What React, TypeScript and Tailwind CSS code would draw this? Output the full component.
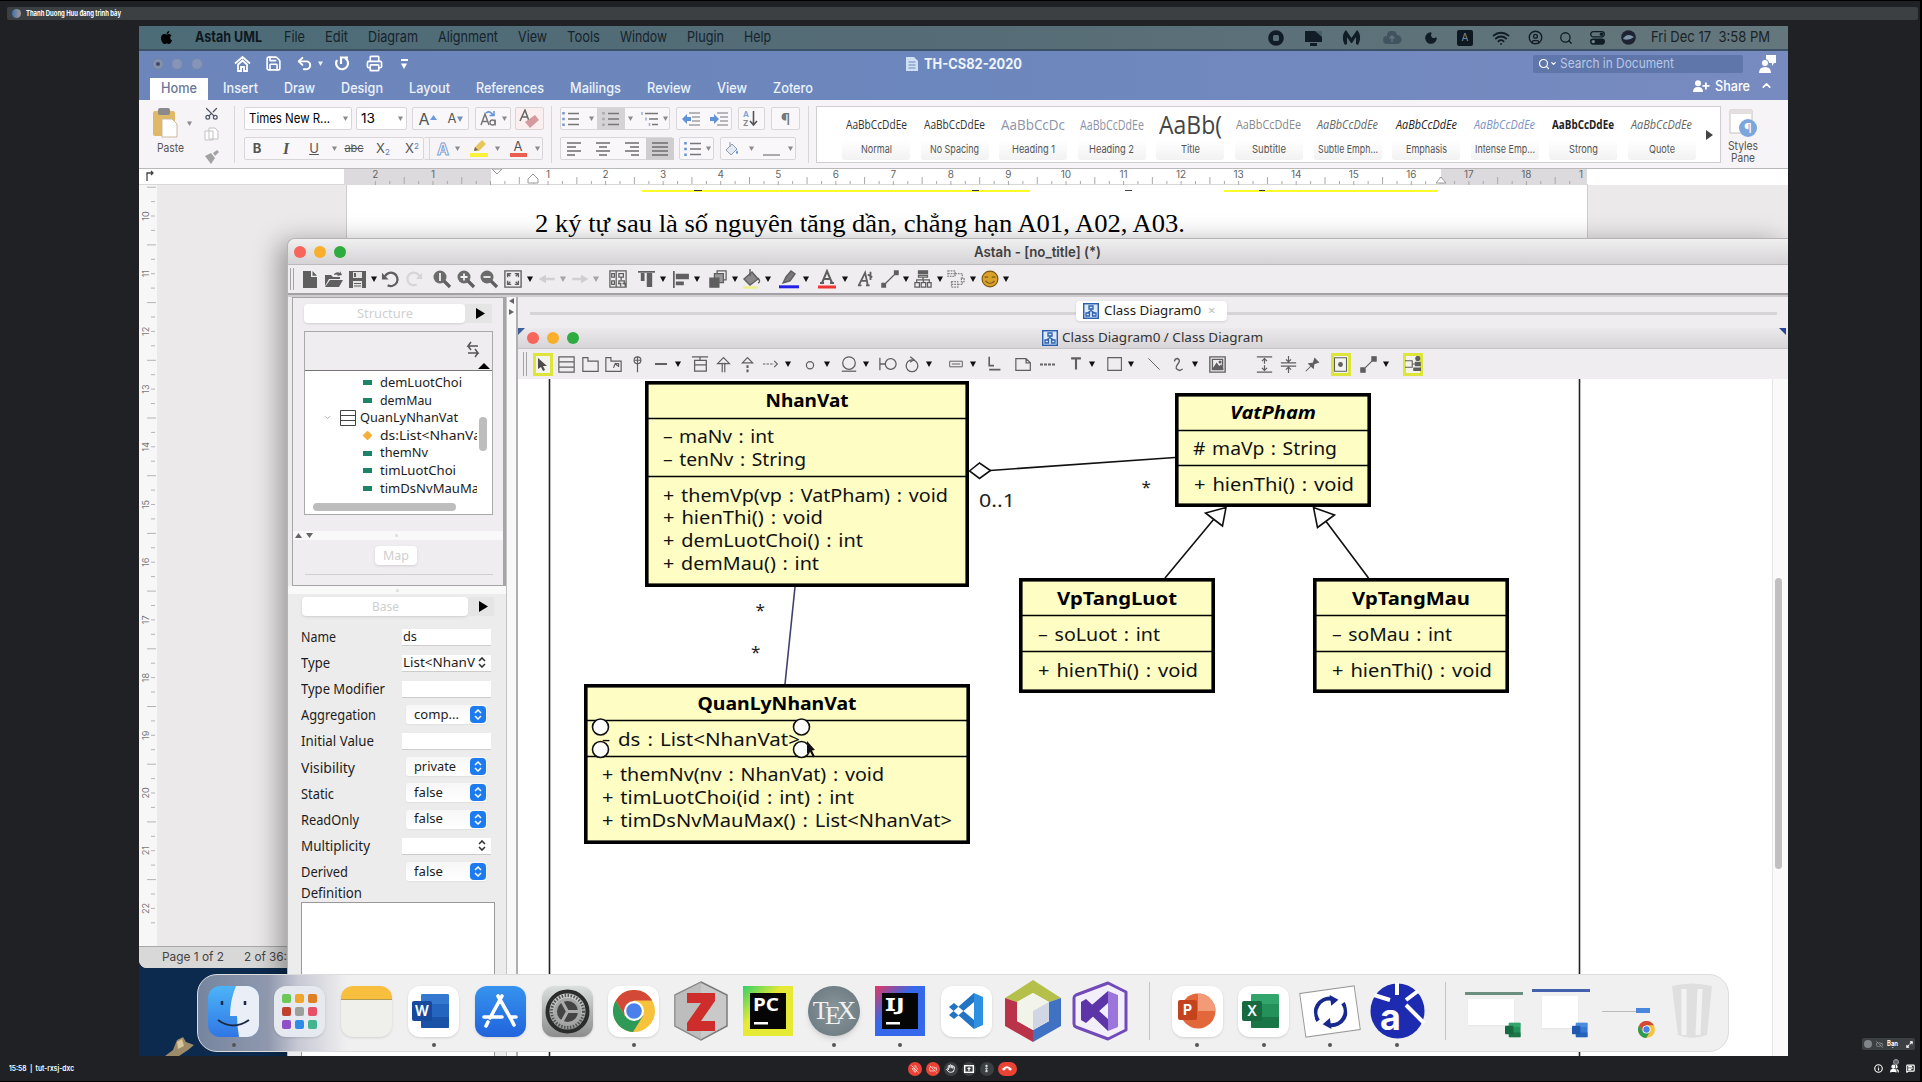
import React, { useLayoutEffect, useRef, useState } from "react";
import { Search, Wifi, Moon, CircleUser, ChevronUp, ChevronDown, Scissors, Printer, Save, Undo2, RotateCcw, Hand, MicOff, VideoOff, EllipsisVertical, Info, MessageSquareText, Maximize2, Users } from "lucide-react";
import { FaApple } from "react-icons/fa";

type Kids = { children?: React.ReactNode };

/* Single line of text stretched to an exact width */
function Fit({ w, className = "", children }: Kids & { w: number; className?: string }) {
  const ref = useRef<HTMLSpanElement>(null);
  const [k, setK] = useState(1);
  useLayoutEffect(() => {
    if (ref.current && ref.current.offsetWidth) setK(w / ref.current.getBoundingClientRect().width);
  }, [w]);
  return (
    <span className={"inline-flex shrink-0 whitespace-pre " + className} style={{ width: w }}>
      <span ref={ref} className="inline-block shrink-0 origin-left" style={{ transform: `scaleX(${k})` }}>
        {children}
      </span>
    </span>
  );
}

type Item = [number, number, React.ReactNode];

/* Toolbar row: each item is [centre, width, content]; gaps follow from the data */
function Row({ x0, items, className = "" }: { x0: number; items: Item[]; className?: string }) {
  let cur = x0;
  return (
    <div className={"flex items-center " + className}>
      {items.map(([cx, w, node], i) => {
        const ml = cx - w / 2 - cur;
        cur = cx + w / 2;
        return (
          <div key={i} className="flex shrink-0 items-center justify-center" style={{ marginLeft: ml, width: w }}>
            {node}
          </div>
        );
      })}
    </div>
  );
}

function G({ s = 20, children, c = "#5b5b5b", f = "none", sw = 1.4 }: Kids & { s?: number; c?: string; f?: string; sw?: number }) {
  return (
    <svg width={s} height={s} viewBox="0 0 20 20" fill={f} stroke={c} strokeWidth={sw} className="shrink-0">
      {children}
    </svg>
  );
}

const Down = ({ c = "#111", s = 6 }: { c?: string; s?: number }) => (
  <svg width={s} height={s} viewBox="0 0 6 6" className="shrink-0"><path d="M0 .5h6L3 6z" fill={c} /></svg>
);
const Right = () => (
  <svg width="9" height="11" viewBox="0 0 9 11" className="shrink-0"><path d="M0 0l9 5.5L0 11z" fill="#000" /></svg>
);
const Lights = ({ className = "" }: { className?: string }) => (
  <div className={"flex gap-[8px] " + className}>
    <i className="size-[12px] rounded-full bg-[#f8655a]" />
    <i className="size-[12px] rounded-full bg-[#f8b02c]" />
    <i className="size-[12px] rounded-full bg-[#2fac40]" />
  </div>
);

/* ---------- Mac menu bar ---------- */
const menus: [string, number][] = [["File", 21], ["Edit", 23], ["Diagram", 50], ["Alignment", 60], ["View", 29], ["Tools", 33], ["Window", 47], ["Plugin", 37], ["Help", 27]];

function MenuBar() {
  const k = "#101c26";
  return (
    <div className="flex h-[25px] items-center border-b-2 border-[#3d5166] bg-linear-to-r from-[#4c6c78] via-[#566c76] to-[#64777c] text-[15px] text-[#15232c]">
      <FaApple className="ml-[20px] size-[15px] text-black" />
      <Fit w={67} className="ml-[21px] font-bold text-[#0d1820]">Astah UML</Fit>
      <div className="ml-[22px] flex gap-5">
        {menus.map(([t, w]) => <Fit key={t} w={w}>{t}</Fit>)}
      </div>
      <Row
        x0={771}
        items={[
          [1276, 18, <svg width="16" height="16" viewBox="0 0 16 16"><circle cx="8" cy="8" r="7.8" fill={k} /><rect x="5" y="5" width="6" height="6" rx="1.5" fill="#566c76" /></svg>],
          [1313.5, 20, <svg width="19" height="16" viewBox="0 0 19 16"><path d="M1 1h17v11H1zM6 13h7v3H6z" fill={k} /><path d="M11 1h7v6z" fill="#4a5e68" /></svg>],
          [1351, 20, <svg width="19" height="17" viewBox="0 0 19 17"><path d="M4 1C0 5 0 11 3 16l2-1V8l4 6 1 0 4-6v7l2 1c3-5 3-11-1-15L9.500 9z" fill={k} /></svg>],
          [1392, 20, <svg width="20" height="14" viewBox="0 0 20 14"><path d="M5 13a4 4 0 010-8 5 5 0 0110-1 4.500 4.500 0 010 9z" fill="#40535f" /><path d="M10 5v6M7.500 7.500L10 5l2.500 2.500" stroke="#61757e" strokeWidth="1.500" fill="none" /></svg>],
          [1431, 16, <Moon size={14} fill={k} color={k} />],
          [1465, 16, <div className="flex h-[16px] w-[16px] items-center justify-center rounded-[2px] bg-[#0e1820] text-[10px] text-[#7d919b]">A</div>],
          [1501, 20, <Wifi size={18} color={k} strokeWidth={2.4} />],
          [1535, 16, <CircleUser size={15} color={k} strokeWidth={2.2} />],
          [1566, 16, <Search size={14} color={k} strokeWidth={2.2} />],
          [1597, 16, <svg width="15" height="14" viewBox="0 0 15 14"><rect x=".7" y=".7" width="13.600" height="5.200" rx="2.600" fill="none" stroke={k} strokeWidth="1.300" /><circle cx="11.500" cy="3.300" r="1.800" fill={k} /><rect x="0" y="7.500" width="15" height="6.200" rx="3.100" fill={k} /><circle cx="3.300" cy="10.600" r="1.700" fill="#71848b" /></svg>],
          [1628, 16, <svg width="15" height="15" viewBox="0 0 15 15"><circle cx="7.500" cy="7.500" r="7.300" fill="#1d2333" /><path d="M2 9q4-7 11-2-5 4-11 2" fill="#7e93a6" /></svg>],
          [1710, 119, <Fit w={119} className="text-[#1b2226]">{"Fri Dec 17  3:58 PM"}</Fit>],
        ]}
      />
    </div>
  );
}

/* ---------- Word ---------- */
const tabs: [string, number][] = [["Insert", 35], ["Draw", 31], ["Design", 42], ["Layout", 41], ["References", 68], ["Mailings", 51], ["Review", 44], ["View", 30], ["Zotero", 40]];

function WordTitle() {
  return (
    <div className="h-[49px] bg-linear-to-r from-[#6c86bb] via-[#6c87bd] via-50% to-[#788bc0] text-white">
      <Row
        x0={139}
        className="h-[25px]"
        items={[
          [158, 11, <i className="size-[10px] rounded-full bg-[#8290ae] ring-1 ring-[#7283a6]"><b className="m-[3px] block size-[4px] rounded-full bg-[#3e4a66]" /></i>],
          [177, 11, <i className="size-[10px] rounded-full bg-[#8595b8] ring-1 ring-[#7586ad]" />],
          [197, 11, <i className="size-[10px] rounded-full bg-[#8595b8] ring-1 ring-[#7586ad]" />],
          [242, 18, <svg width="17" height="16" viewBox="0 0 17 16" fill="none" stroke="#fff" strokeWidth="1.800"><path d="M1 7.500l7.500-6.500L16 7.500M3.500 9l5-4.500 5 4.500M4 9v6h3v-4h3v4h3V9" /></svg>],
          [273, 18, <Save size={17} strokeWidth={2.300} />],
          [304, 18, <Undo2 size={17} strokeWidth={2.8} />],
          [320, 6, <Down c="#e6ecf8" s={5} />],
          [342, 18, <svg width="16" height="17" viewBox="0 0 16 17" fill="none" stroke="#fff" strokeWidth="2.200"><path d="M3 5a6 6 0 108-2" /><path d="M7 9V2.500h7" /></svg>],
          [374, 18, <Printer size={17} strokeWidth={2.300} />],
          [404, 8, <div className="flex flex-col items-center gap-[2px]"><i className="h-[2px] w-[7px] bg-white" /><Down c="#fff" s={6} /></div>],
          [912, 13, <svg width="12" height="14" viewBox="0 0 12 14"><path d="M0 0h8l4 4v10H0z" fill="#cfe0f5" /><path d="M2.500 5h7M2.500 8h7M2.500 11h7" stroke="#6c87bd" /></svg>],
          [973, 98, <Fit w={98} className="text-[14px] font-bold text-[#eef3fb]">TH-CS82-2020</Fit>],
          [1638, 210, (
            <div className="flex h-[18px] w-full items-center rounded-[2px] bg-[#5f76ab] pl-[5px]">
              <Search size={12} strokeWidth={2.4} /><ChevronDown size={7} strokeWidth={4} />
              <Fit w={114} className="ml-[3px] text-[13.5px] text-[#b9c7e6]">Search in Document</Fit>
            </div>
          )],
          [1767, 18, <svg width="17" height="18" viewBox="0 0 17 18" fill="#fff"><path d="M7 0h10v8h-2l-2 3V8H7z" /><circle cx="6" cy="8" r="3.600" stroke="#7489bd" /><path d="M0 18q0-6 6-6t6 6z" /></svg>],
        ]}
      />
      <div className="flex h-[24px] items-center text-[14px]">
        <div className="mt-[2px] ml-[11px] flex h-[22px] w-[58px] items-center justify-center bg-white pb-[4px]">
          <Fit w={36} className="font-medium text-[#6a7796]">Home</Fit>
        </div>
        <div className="mb-[2px] ml-[15px] flex gap-[26px] text-[#edf2fb]">
          {tabs.map(([t, w]) => <Fit key={t} w={w} className="font-medium">{t}</Fit>)}
        </div>
        <div className="mb-[5px] ml-auto flex items-center pr-[15px]">
          <svg width="17" height="12" viewBox="0 0 17 12" fill="#fff"><circle cx="5" cy="3.200" r="3" /><path d="M0 12q0-5 5-5t5 5zM12 2.500h1.800V5h2.700v1.800h-2.700v2.700H12V6.800H9.500V5H12z" /></svg>
          <Fit w={35} className="ml-[5px] font-medium">Share</Fit>
          <ChevronUp size={13} strokeWidth={3} className="ml-[10px]" />
        </div>
      </div>
    </div>
  );
}

const Chev = () => <Down c="#8b8b8b" s={5} />;
const box = "flex h-[23px] items-center rounded-[2px] border border-[#d9d6d9] bg-[#f9f7f9]";
const Lines = ({ d }: { d: string }) => <svg width="16" height="14" viewBox="0 0 16 14" fill="none" stroke="#6e6e6e" strokeWidth="1.300"><path d={d} /></svg>;
const Dotted = ({ c }: { c: string }) => (
  <svg width="18" height="16" viewBox="0 0 18 16" fill="none"><path d="M6 2.500h11M6 8h11M6 13.500h11" stroke="#777" strokeWidth="1.300" /><path d="M1.500 1v14" stroke={c} strokeWidth="2.500" strokeDasharray="2.500 3.200" /></svg>
);
const Box = ({ children, w }: Kids & { w: number }) => <div className={box} style={{ width: w }}>{children}</div>;

const styles: [string, number, string, number, string][] = [
  ["Normal", 31, "text-[13px] text-[#333]", 61, "AaBbCcDdEe"],
  ["No Spacing", 49, "text-[13px] text-[#333]", 61, "AaBbCcDdEe"],
  ["Heading 1", 43, "text-[15px] text-[#8b93a8]", 64, "AaBbCcDc"],
  ["Heading 2", 45, "text-[14px] text-[#8b93a8]", 64, "AaBbCcDdEe"],
  ["Title", 19, "text-[25px] text-[#444]", 63, "AaBb("],
  ["Subtitle", 34, "text-[12px] text-[#888]", 65, "AaBbCcDdEe"],
  ["Subtle Emph...", 60, "text-[13px] italic text-[#666]", 61, "AaBbCcDdEe"],
  ["Emphasis", 41, "text-[13px] italic text-[#222]", 61, "AaBbCcDdEe"],
  ["Intense Emp...", 60, "text-[13px] italic text-[#7b93c6]", 61, "AaBbCcDdEe"],
  ["Strong", 29, "text-[13px] font-bold text-[#222]", 62, "AaBbCcDdEe"],
  ["Quote", 26, "text-[13px] italic text-[#666]", 61, "AaBbCcDdEe"],
];

function Ribbon() {
  return (
    <div className="flex h-[69px] border-b border-[#b9b9b9] bg-[#f7f4f7] pt-[6px] text-[13px] text-[#555]">
      <div className="flex w-[56px] flex-col pl-[14px]">
        <div className="flex h-[34px] items-center">
          <svg width="26" height="32" viewBox="0 0 26 32"><rect x="0" y="4" width="22" height="25" rx="2" fill="#dfb869" /><rect x="5" y="1" width="12" height="7" rx="2" fill="#8a8a8a" /><path d="M9 12h10l5 5v13H9z" fill="#fff" stroke="#c9b999" /></svg>
          <span className="ml-2"><Chev /></span>
        </div>
        <Fit w={27} className="ml-[4px] text-[12px] leading-[16px]">Paste</Fit>
      </div>
      <div className="flex w-[32px] flex-col items-center gap-[6px]">
        <Scissors size={15} color="#4e5566" strokeWidth={2} className="-rotate-90" />
        <svg width="15" height="17" viewBox="0 0 15 17" fill="#fff" stroke="#c2c2c2"><path d="M1 4h8v9H1zM5 1h6l3 3v8H5z" /></svg>
        <svg width="15" height="14" viewBox="0 0 15 14" fill="#a2a2a2"><path d="M1 6l6-3 4 5-4 6zM9 3l4-3 2 2-4 4z" /></svg>
      </div>
      <i className="mx-[7px] h-[57px] w-px bg-[#d8d6d8]" />
      <div className="flex flex-col gap-[7px] pt-[1px] pl-[2px]">
        <div className="flex">
          <div className={box + " w-[108px] bg-white pl-[4px] text-black"}><Fit w={81} className="text-[13px]">Times New R...</Fit><span className="ml-[13px]"><Chev /></span></div>
          <div className={box + " ml-[4px] w-[51px] bg-white pl-[4px] text-black"}><Fit w={14}>13</Fit><span className="ml-[23px]"><Chev /></span></div>
          <div className={box + " ml-[5px] w-[57px] justify-around"}>
            <span className="flex text-[16px]">A<svg width="7" height="5" viewBox="0 0 7 5" className="mt-[8px]"><path d="M0 5L3.500 0 7 5z" fill="#6a9be0" /></svg></span>
            <span className="flex text-[13px]">A<span className="mt-[7px]"><Down c="#7d8fb8" s={6} /></span></span>
          </div>
          <div className={box + " ml-[6px] w-[36px] justify-center gap-[5px]"}>
            <svg width="17" height="18" viewBox="0 0 17 18" fill="none"><path d="M1 15L5 4l4 11M2.500 11.500h5" stroke="#777" strokeWidth="1.500" /><circle cx="12.500" cy="12.500" r="2.500" stroke="#777" strokeWidth="1.300" /><path d="M15.200 9.500V15.500" stroke="#777" strokeWidth="1.300" /><path d="M6 3q4-3 7 2M14 1v4.500H9.500" stroke="#5f92d8" strokeWidth="1.500" /></svg>
            <Chev />
          </div>
          <div className={box + " ml-[4px] w-[29px] justify-center bg-[#fbeff0]"}><svg width="21" height="20" viewBox="0 0 21 20"><path d="M1 12L6 1l4 11M3 8h6" stroke="#666" fill="none" strokeWidth="1.500" /><path d="M6 13l10-7 4 5-9 8z" fill="#d49a9f" /></svg></div>
        </div>
        <div className="flex">
          <Row
            x0={244}
            className={box + " w-[180px]"}
            items={[
              [256, 14, <b>B</b>], [285, 14, <i className="font-['Liberation_Serif'] text-[16px] font-bold">I</i>], [313, 14, <u>U</u>], [333, 6, <Chev />],
              [353, 20, <s className="text-[11px]">abc</s>], [382, 18, <span>X<sub className="text-[8px] text-[#5a80c0]">2</sub></span>], [411, 18, <span>X<sup className="text-[8px] text-[#5a80c0]">2</sup></span>],
            ]}
          />
          <Row
            x0={424}
            className="h-[23px] w-[119px] rounded-[2px] border-y border-r border-[#d9d6d9]"
            items={[
              [429, 1, <i className="h-[23px] w-px bg-[#d9d6d9]" />],
              [443, 16, <span className="text-[16px] font-bold text-white [-webkit-text-stroke:1px_#7f9fd4]">A</span>], [457.5, 6, <Chev />],
              [479, 18, <svg width="18" height="19" viewBox="0 0 18 19"><path d="M0 14h18v4H0z" fill="#f9f13a" /><path d="M4 12l1-4 7-7 4 4-7 7z" fill="#e9c65c" /><path d="M4 12l1-4 3 3z" fill="#666" /></svg>], [497.5, 6, <Chev />],
              [518, 18, <div className="flex flex-col items-center"><span className="text-[13px] leading-[13px]">A</span><i className="h-[4px] w-[17px] bg-[#ec5f50]" /></div>], [537, 6, <Chev />],
            ]}
          />
        </div>
      </div>
      <i className="mr-[8px] ml-[7px] h-[57px] w-px bg-[#d8d6d8]" />
      <div className="flex flex-col gap-[7px] pt-[1px]">
        <div className="flex gap-[6px]">
          <Box w={110}>
            <Row x0={561} items={[[571, 18, <Dotted c="#7896c8" />], [591, 6, <Chev />], [611, 28, <div className="flex h-[22px] w-[28px] items-center justify-center bg-[#d5d3d5]"><Dotted c="#aaa" /></div>], [630, 6, <Chev />], [650, 18, <svg width="18" height="16" viewBox="0 0 18 16" fill="none"><path d="M4 2.500h13M8 8h9M11 13.500h6" stroke="#777" strokeWidth="1.300" /><path d="M1 1v3M5 6.500v3M8.500 12v3" stroke="#9fb3d3" strokeWidth="1.600" /></svg>], [665, 6, <Chev />]]} />
          </Box>
          <Box w={56}>
            <Row x0={677} items={[[691, 18, <svg width="18" height="14" viewBox="0 0 18 14"><path d="M7 1h11M10 5h8M10 9h8M7 13h11" stroke="#777" /><path d="M0 7l5-5v3h4v4H5v3z" fill="#5f92d8" /></svg>], [719, 18, <svg width="18" height="14" viewBox="0 0 18 14"><path d="M7 1h11M10 5h8M10 9h8M7 13h11" stroke="#777" /><path d="M9 7L4 2v3H0v4h4v3z" fill="#5f92d8" /></svg>]]} />
          </Box>
          <Box w={27}><span className="ml-1 flex flex-col text-[8px] leading-[9px]"><b className="text-[#86a5d8]">A</b><b className="text-[#888]">Z</b></span><svg width="9" height="16" viewBox="0 0 9 16"><path d="M4.500 0v13M1 10l3.500 4L8 10" stroke="#555" strokeWidth="1.600" fill="none" /></svg></Box>
          <Box w={29}><span className="mx-auto text-[16px] text-[#777]">¶</span></Box>
        </div>
        <div className="flex gap-[6px]">
          <Box w={113}>
            <Row x0={561} items={[[575, 16, <Lines d="M0 1h14M0 5h9M0 9h14M0 13h8" />], [603, 16, <Lines d="M1 1h14M4 5h8M1 9h14M4 13h8" />], [632, 16, <Lines d="M1 1h14M6 5h9M1 9h14M7 13h8" />], [660, 28, <div className="flex h-[22px] w-[28px] items-center justify-center bg-[#cfcdcf]"><Lines d="M0 1h16M0 5h16M0 9h16M0 13h16" /></div>]]} />
          </Box>
          <Box w={35}><Row x0={681} items={[[694, 18, <Dotted c="#5f92d8" />], [709, 6, <Chev />]]} /></Box>
          <Box w={76}><Row x0={720} items={[[731, 14, <svg width="14" height="14" viewBox="0 0 14 14"><path d="M1 8l6-6 5 5-6 6z" fill="#e4eaf3" stroke="#8b9ab5" /><path d="M5 0v5" stroke="#8b9ab5" /><path d="M12 8q2 3 0 4-2-1 0-4" fill="#5f92d8" /></svg>], [750, 6, <Chev />], [770, 18, <i className="mt-3 h-[2px] w-[17px] bg-[#aaa]" />], [789, 6, <Chev />]]} /></Box>
        </div>
      </div>
      <i className="mr-[7px] ml-[8px] h-[57px] w-px bg-[#d8d6d8]" />
      <div className="flex h-[57px] w-[905px] items-center border border-[#d0ced0] bg-white pl-[25px]">
        {styles.map(([n, w, cls, sw, s]) => (
          <div key={n} className="mr-[10.6px] flex h-[50px] w-[68px] shrink-0 flex-col">
            <div className="flex h-[30px] items-center justify-center font-['Open_Sans']"><Fit w={sw} className={cls}>{s}</Fit></div>
            <div className="flex h-[20px] items-center justify-center rounded-b-[3px] bg-linear-to-b from-white to-[#f3f2f3] text-[11px]"><Fit w={w}>{n}</Fit></div>
          </div>
        ))}
        <svg width="7" height="10" viewBox="0 0 7 10" className="-ml-[1px]"><path d="M0 0l7 5-7 5z" fill="#444" /></svg>
      </div>
      <div className="flex w-[44px] flex-col items-center text-[12px] leading-[12px]">
        <svg width="30" height="34" viewBox="0 0 30 34"><path d="M2 4h22v23H2z" fill="#fff" stroke="#c9c0c0" /><path d="M2 4h22v4H2z" fill="#e5dede" /><circle cx="20" cy="22" r="9" fill="#7ba6de" /><text x="20" y="27" textAnchor="middle" fontSize="13" fill="#fff">¶</text></svg>
        <Fit w={30}>Styles</Fit>
        <Fit w={24}>Pane</Fit>
      </div>
    </div>
  );
}

const Ruler = () => (
  <div className="flex h-[16px] border-b border-[#d8d8d8] bg-white">
    <svg width="1649" height="16" viewBox="139 0 1649 16">
      <path d="M344 0h147v16H344zM1441 0h146v16h-146z" fill="#dcdadc" />
      <path d="M147 12V4h6m-2-2l2 2-2 2" stroke="#444" strokeWidth="1.300" fill="none" />
      {Array.from({ length: 21 }, (_, i) => i - 2).map((n) => {
        const x = 490.5 + 57.55 * n;
        return (
          <g key={n}>
            {n !== 0 && <text x={x} y="9" fontSize="10" fill="#666" textAnchor="middle">{Math.abs(n)}</text>}
            <path d={`M${x} 12v4M${x + 14.4} 12v3M${x + 28.8} 8v7M${x + 43.3} 12v3`} stroke="#a8a8a8" strokeWidth="1" />
          </g>
        );
      })}
      <text x="1579" y="9" fontSize="10" fill="#666">1</text>
      <path d="M1588 0h200v16h-200z" fill="#fff" />
      <path d="M492 0h10l-5 5z" fill="#fff" stroke="#999" />
      <path d="M528 14v-4l5-5 5 5v4z" fill="#fff" stroke="#999" />
      <path d="M1436 14l5-6 5 6z" fill="#fff" stroke="#999" />
    </svg>
  </div>
);

function Word() {
  return (
    <div className="absolute inset-x-0 top-[25px] flex h-[917px] flex-col overflow-hidden rounded-bl-[8px] bg-[#ebe9ea] font-[Inter]">
      <WordTitle />
      <Ribbon />
      <Ruler />
      <div className="flex min-h-0 flex-1">
        <svg width="20" height="762" viewBox="0 0 20 762" className="shrink-0">
          <rect width="18" height="762" fill="#f8f7f8" />
          {Array.from({ length: 13 }, (_, i) => {
            const y = 31 + i * 57.7;
            return (
              <g key={i}>
                <text transform={`translate(9.500 ${y}) rotate(-90)`} textAnchor="middle" fontSize="9" fill="#777">{10 + i}</text>
                <path d={`M12 ${y}h4M12 ${y - 14.4}h4M8 ${y - 28.8}h9M12 ${y + 14.4}h4`} stroke="#b5b3b5" />
              </g>
            );
          })}
        </svg>
        <div className="ml-[187px] h-[80px] w-[1242px] border-x border-[#ccc] bg-white">
          <div className="mt-[5px] flex">
            <i className="ml-[295px] flex h-[2px] w-[388px] bg-[#fbfb2a] pl-[52px]"><b className="h-px w-[8px] bg-[#333]" /><b className="ml-[270px] h-px w-[7px] bg-[#333]" /></i>
            <i className="ml-[95px] h-px w-[7px] bg-[#444]" />
            <i className="ml-[92px] flex h-[2px] w-[213px] bg-[#fbfb2a] pl-[35px]"><b className="h-px w-[6px] bg-[#333]" /></i>
          </div>
          <Fit w={650} className="mt-[15px] ml-[188px] font-['Liberation_Serif'] text-[25.500px] leading-[34px] text-black">2 ký tự sau là số nguyên tăng dần, chẳng hạn A01, A02, A03.</Fit>
        </div>
      </div>
      <div className="flex h-[22px] items-center gap-[20px] border-t border-[#a9a9a9] bg-[#d9d8d9] pb-[2px] pl-[23px] text-[12px] text-[#444]">
        <Fit w={62}>Page 1 of 2</Fit>
        <Fit w={43}>2 of 36:</Fit>
      </div>
    </div>
  );
}

/* ---------- Astah ---------- */
const dg = "#5f5f5f";
const Mag = ({ children }: Kids) => <G s={20} c={dg} sw={2.4}><circle cx="8" cy="8" r="6.500" fill="#6b6b6b" stroke="none" /><path d="M12 12l6 6" strokeWidth="3.200" /><g stroke="#f1f1f1" strokeWidth="1.800">{children}</g></G>;
const D: React.ReactNode = <Down />;

const mainTools: Item[] = [
  [292, 5, <i className="h-[22px] w-[4px] border-x border-[#a5a5a5]" />],
  [309.5, 18, <svg width="14" height="17" viewBox="0 0 14 17" fill={dg}><path d="M0 0h8v6h6v11H0zM9.500 0L14 4.700H9.500z" /></svg>],
  [334, 18, <svg width="18" height="16" viewBox="0 0 18 16" fill={dg}><path d="M0 4h6l2 2h7v2H4l-4 7zM5 9h13l-4 7H0zM9 3q3-3 6-1V0l2 4-5 1 1-1q-2-1-4 0z" /></svg>],
  [357, 18, <svg width="17" height="17" viewBox="0 0 17 17" fill={dg}><path d="M0 0h17v17H0z" /><path d="M4 1h9v6H4zM4 10h9v7H4z" fill="#e5e5e5" /><path d="M5 2h2v4H5zM5 12h7v1H5zM5 14.500h7v1H5z" /></svg>],
  [374, 6, D],
  [390, 18, <G s={19} c={dg} sw={2.4}><path d="M4 7a7 7 0 113 9" /><path d="M1 3v7h7z" fill={dg} stroke="none" /></G>],
  [414, 18, <G s={18} c="#d5d5d5" sw={2.4}><path d="M16 7a7 7 0 10-3 9" /><path d="M19 3v7h-7z" fill="#d5d5d5" stroke="none" /></G>],
  [442, 18, <Mag><path d="M8 4v8" /></Mag>],
  [465.5, 18, <Mag><path d="M8 4.500v7M4.500 8h7" /></Mag>],
  [489, 18, <Mag><path d="M4.500 8h7" /></Mag>],
  [513, 18, <G s={18} c={dg} sw={1.5}><path d="M1 1h18v18H1zM4 8V4h4M12 4h4v4M16 12v4h-4M8 16H4v-4M4 4l3 3M16 4l-3 3M4 16l3-3M16 16l-3-3" /></G>],
  [530, 6, D],
  [547, 16, <G s={16} c="#cfcfcf" f="#cfcfcf"><path d="M1 10l7-4v3h11v2H8v3z" /></G>],
  [563, 6, <Down c="#a5a5a5" />],
  [580, 16, <G s={16} c="#cfcfcf" f="#cfcfcf"><path d="M19 10l-7-4v3H1v2h11v3z" /></G>],
  [596, 6, <Down c="#a5a5a5" />],
  [618, 18, <G s={18} c={dg}><path d="M1 1h18v18H1zM8 1v18M3 4h3v4H3zM3 12h3v4H3zM11 4h5v4h-5zM13.500 8v3M11 16v-4h6v4M10 15h3v3M15 15h3v3" /></G>],
  [646, 18, <G s={17} c={dg} f={dg}><path d="M0 1h20" strokeWidth="2" /><path d="M4 3h3v8H4zM11 3h5v15h-5z" /></G>],
  [663, 6, D],
  [681, 18, <G s={17} c={dg} f={dg}><path d="M1 0v20" strokeWidth="2" /><path d="M4 4h14v5H4zM4 13h8v3H4z" /></G>],
  [696.5, 6, D],
  [718, 18, <G s={18} c={dg}><path d="M9 1h10v10H9z" /><path d="M6 4h10v10H6z" fill="#999" /><path d="M1 9h10v10H1z" fill={dg} /></G>],
  [734.5, 6, D],
  [751, 20, <G s={20} c={dg}><path d="M3 10l8-7 6 7-8 6z" fill="#8a8a8a" /><path d="M9 0v7M17 9q3 4 0 5" /><path d="M2 18.500h15" stroke="#edf08a" strokeWidth="2.500" /></G>],
  [768, 6, D],
  [789, 20, <G s={20} c={dg}><path d="M4 14l3-6 5-6 4 3-5 7z" fill="#7a7a7a" /><path d="M0 17.800h20" stroke="#2222e6" strokeWidth="3" /></G>],
  [806, 6, D],
  [827, 20, <G s={20} c={dg} sw={2}><path d="M5 14l5-12 5 12M7 10h6M3 14h4M13 14h4" /><path d="M1 18h18" stroke="#f03434" strokeWidth="3" /></G>],
  [844.5, 6, D],
  [866, 18, <G s={18} c={dg} sw={2}><path d="M2 17L9 3l3 14M5 12h7M1 17h4M10 17h4M15 2v9M12 5l5 3" /></G>],
  [890, 18, <G s={18} c={dg} f={dg}><path d="M1 15h4v4H1zM15 1h4v4h-4zM3 17L17 3" /></G>],
  [906, 6, D],
  [922.5, 18, <G s={18} c={dg}><path d="M5 1h10v3H5z" fill={dg} /><path d="M5 6h10v2H5zM10 8v3M3 14v-3h14v3M1 14h5v5H1zM8 14h5v5H8zM15 14h4v5h-4zM10.500 11v3" /></G>],
  [939.5, 6, D],
  [956, 18, <G s={18} c="#888"><path d="M1 1h8v6H1zM1 4h8M5 13h7v6H5zM5 16h7M16 9h3v4h-3zM9 4h8v5M12 16h5v-3" strokeDasharray="2 1" /></G>],
  [973, 6, D],
  [990, 18, <G s={18} c="#7b5a10" sw={1.3}><circle cx="10" cy="10" r="8.800" fill="#d9a02c" /><path d="M4 8h4M12 8h4M5 12q5 6 10 0" /></G>],
  [1006, 6, D],
];

const hi = "flex h-[23px] w-[20px] items-center justify-center border-[3px] border-[#dde43a] bg-[#f3f3ee]";
const diagTools: Item[] = [
  [525, 5, <i className="h-[24px] w-[4px] border-x border-[#a5a5a5]" />],
  [542.5, 22, <div className={hi}><svg width="11" height="13" viewBox="0 0 11 13"><path d="M1 0l9 8H6l2 4-2 1-2-4-3 2z" fill="#4d4d4d" /></svg></div>],
  [566, 17, <G s={17} c={dg}><path d="M1 1h18v18H1zM1 7h18M1 13h18" /></G>],
  [590, 17, <G s={17} c={dg}><path d="M1 18V2h6v4h12v12z" /></G>],
  [613.5, 17, <G s={17} c={dg}><path d="M1 18V2h6v4h12v12zM10 14l2-5 3 3M12 9h4v4" /></G>],
  [637, 17, <G s={17} c={dg}><circle cx="10" cy="5" r="4" /><path d="M6 5h8M10 1v18" /></G>],
  [660.5, 14, <i className="h-[2px] w-[12px] bg-[#5f5f5f]" />], [677.5, 6, D],
  [699.5, 17, <G s={18} c={dg}><path d="M1 2h18M4 6h13v5H4zM4 11h13v7H4zM10 2v4" /></G>],
  [723.5, 17, <G s={17} c={dg}><path d="M8.500 19V8M11.500 19V8M3 9l7-7 7 7z" /></G>],
  [747, 17, <G s={17} c={dg}><path d="M10 19V9" strokeDasharray="3 2" strokeWidth="2.500" /><path d="M4 8l6-6 6 6z" /></G>],
  [770.5, 17, <G s={16} c={dg}><path d="M0 10h14" strokeDasharray="3 1.500" /><path d="M14 6l4 4-4 4" /></G>], [787.5, 6, D],
  [809.5, 12, <G s={12} c={dg} sw={2}><circle cx="10" cy="12" r="6" /></G>], [826.5, 6, D],
  [848.5, 17, <G s={18} c={dg}><circle cx="10" cy="9" r="7" /><path d="M2 18h16" /></G>], [865.5, 6, D],
  [888, 17, <G s={18} c={dg}><circle cx="13" cy="10" r="6" /><path d="M1 3v14M1 10h6" /></G>],
  [911.5, 17, <G s={18} c={dg}><circle cx="10" cy="12" r="6.500" /><path d="M8 2l4 3-4 3" /></G>], [928.5, 6, D],
  [955.5, 14, <G s={14} c={dg}><path d="M1 6h18v8H1zM4 10h12" /></G>], [973, 6, D],
  [994, 14, <G s={16} c={dg}><path d="M4 1v11h6M4 17h14" strokeWidth="2" /></G>],
  [1023, 17, <G s={17} c={dg}><path d="M1 3h12l5 5v9H1zM13 3v5h5" /></G>],
  [1047, 16, <svg width="15" height="3" viewBox="0 0 15 3"><path d="M0 1.500h15" stroke="#666" strokeWidth="1.800" strokeDasharray="3 1" /></svg>],
  [1075.5, 12, <G s={14} c={dg} sw={3}><path d="M3 2h14M10 2v16" /></G>], [1092, 6, D],
  [1114.5, 16, <G s={16} c={dg}><path d="M1 2h17v16H1z" /></G>], [1131, 6, D],
  [1153.5, 14, <G s={14} c={dg}><path d="M2 2l16 16" /></G>],
  [1177.5, 14, <G s={15} c={dg} sw={1.8}><path d="M6 6q0-4 4-4 5 2 0 8t3 8l4-2" /></G>], [1194.5, 6, D],
  [1217, 17, <G s={17} c={dg} sw={1.6}><path d="M1 1h18v18H1zM4 4h12v12H4z" /><path d="M5 15l4-6 3 4 2-2 2 4z" fill={dg} /><circle cx="13" cy="7" r="1" /></G>],
  [1264.5, 17, <G s={17} c={dg}><path d="M1 1h18M1 19h18M10 4v5M7 6l3-3 3 3M10 16v-5M7 14l3 3 3-3" /></G>],
  [1288, 17, <G s={17} c={dg}><path d="M1 8h18M1 12h18M10 0v6M7 4l3 3 3-3M10 20v-6M7 16l3-3 3 3" /></G>],
  [1312.5, 14, <G s={15} c={dg}><path d="M1 19L8 12" /><path d="M5 9l6-1 2-6 5 5-6 2-1 6z" fill={dg} /></G>],
  [1340.5, 22, <div className={hi}><G s={15} c={dg}><path d="M2 1h16v18H2z" /><circle cx="10" cy="10" r="2.500" fill={dg} /></G></div>],
  [1368.5, 17, <G s={17} c={dg} f={dg}><path d="M1 14h5v5H1zM14 1h5v5h-5zM3 17L17 3" /></G>], [1386, 6, D],
  [1412.5, 22, <div className={hi}><G s={16} c={dg}><path d="M0 6h9v8H0M9 10h4" /><path d="M13 8h6v4h-6zM11 15h9v3h-9z" fill={dg} /><circle cx="16" cy="3" r="2.500" fill={dg} /></G></div>],
];

const tree: [string, string, number][] = [
  ["op", "demLuotChoi", 82], ["op", "demMau", 52], ["class", "QuanLyNhanVat", 98], ["attr", "ds:List<NhanVat>", 114], ["op", "themNv", 48], ["op", "timLuotChoi", 76], ["op", "timDsNvMauMax", 106],
];

const Blue = () => (
  <div className="ml-auto flex h-[17px] w-[16px] items-center justify-center rounded-[4px] bg-[#1c7bf0]">
    <svg width="8" height="11" viewBox="0 0 8 11" fill="none" stroke="#fff" strokeWidth="1.500"><path d="M1 4l3-3 3 3M1 7l3 3 3-3" /></svg>
  </div>
);
const Dark = () => (
  <svg width="8" height="11" viewBox="0 0 8 11" fill="none" stroke="#333" strokeWidth="1.600" className="ml-auto"><path d="M1 4l3-3 3 3M1 7l3 3 3-3" /></svg>
);

const fields: [string, number, string, string, number][] = [
  ["Name", 35, "text", "ds", 14], ["Type", 29, "combo", "List<NhanV", 72], ["Type Modifier", 84, "text", "", 0], ["Aggregation", 75, "select", "comp...", 45],
  ["Initial Value", 73, "text", "", 0], ["Visibility", 54, "select", "private", 42], ["Static", 33, "select", "false", 29], ["ReadOnly", 58, "select", "false", 29],
  ["Multiplicity", 69, "combo", "", 0], ["Derived", 47, "select", "false", 29],
];

function SidePanel() {
  return (
    <div className="flex w-[219px] shrink-0 flex-col border-r border-[#c4c2c4] bg-[#ececec] text-[13px] text-[#1c1c1c]">
      <div className="ml-[4px] flex h-[289px] shrink-0 flex-col border-t border-r-[3px] border-b border-l border-[#a6a4a6] bg-[#efedef]">
        <div className="mt-[6px] ml-[11px] flex h-[19px] shrink-0 items-center">
          <div className="flex h-[19px] w-[161px] items-center justify-center rounded-[4px] bg-white shadow-sm"><Fit w={56} className="text-[12px] text-[#cfcfcf]">Structure</Fit></div>
          <div className="flex h-full w-[27px] items-center justify-center bg-[#e6e5e6] pl-1"><Right /></div>
        </div>
        <div className="mt-[8px] ml-[11px] flex h-[184px] w-[189px] shrink-0 flex-col border border-[#a9a9a9]">
          <div className="relative h-[38px] shrink-0">
            <svg width="30" height="32" viewBox="0 0 30 32" className="absolute top-[7px] right-0" fill="none" stroke="#555" strokeWidth="1.500"><path d="M16 7H6l3-4M6 7l3 4M6 14h10l-3-4M16 14l-3 4" /><path d="M16 30l6-6 6 6z" fill="#000" stroke="none" /></svg>
          </div>
          <div className="flex min-h-0 flex-1 border-t border-[#777] bg-white">
            <div className="flex w-[172px] flex-col overflow-hidden pt-[3px]">
              {tree.map(([k, t, w]) => (
                <div key={t} className="flex h-[17.600px] shrink-0 items-center">
                  {k === "class" ? (
                    <>
                      <ChevronDown size={9} color="#999" className="ml-[18px] shrink-0" />
                      <svg width="16" height="16" viewBox="0 0 16 16" fill="#fff" stroke="#444" className="mr-[4px] ml-[8px] shrink-0"><path d="M.5.5h15v15H.5zM0 5.500h16M0 10.500h16" /></svg>
                    </>
                  ) : k === "attr" ? (
                    <i className="mr-[9px] ml-[59px] size-[7px] shrink-0 rotate-45 rounded-[1px] bg-[#f6b038]" />
                  ) : (
                    <i className="mr-[8px] ml-[58px] h-[5px] w-[9px] shrink-0 bg-[#1e8468]" />
                  )}
                  <Fit w={w}>{t}</Fit>
                </div>
              ))}
              <i className="mt-[6px] ml-[8px] h-[8px] w-[143px] shrink-0 rounded-full bg-[#bdbdbd]" />
            </div>
            <i className="mt-[46px] ml-[2px] h-[34px] w-[8px] rounded-full bg-[#bdbdbd]" />
          </div>
        </div>
        <div className="mt-[16px] flex h-[9px] shrink-0 items-center gap-[4px] bg-[#f9f9f9] pl-[2px]">
          <svg width="7" height="5" viewBox="0 0 7 5"><path d="M0 5L3.500 0 7 5z" fill="#666" /></svg>
          <svg width="7" height="5" viewBox="0 0 7 5"><path d="M0 0h7L3.500 5z" fill="#666" /></svg>
          <i className="ml-[78px] size-[3px] rounded-full bg-[#ddd]" />
        </div>
        <div className="mt-[6px] flex justify-center pr-[4px]"><div className="flex h-[19px] w-[42px] items-center justify-center rounded-[4px] bg-white shadow"><Fit w={26} className="text-[12px] text-[#cfcfcf]">Map</Fit></div></div>
        <i className="mt-[9px] ml-[12px] h-px w-[188px] bg-[#d0d0d0]" />
      </div>
      <div className="flex h-[8px] shrink-0 items-center justify-center bg-[#f9f9f9]"><i className="size-[3px] rounded-full bg-[#ddd]" /></div>
      <div className="mt-[3px] ml-[14px] flex h-[19px] shrink-0 items-center">
        <div className="flex h-[19px] w-[166px] items-center justify-center rounded-[4px] bg-white shadow-sm"><Fit w={27} className="text-[12px] text-[#cfcfcf]">Base</Fit></div>
        <div className="flex h-full w-[26px] items-center justify-center bg-[#e6e5e6] pl-1"><Right /></div>
      </div>
      <div className="mt-[8px] flex flex-col pl-[13px]">
        {fields.map(([n, w, kind, v, vw]) => (
          <div key={n} className="flex h-[26.150px] shrink-0 items-center">
            <div className="w-[101px]"><Fit w={w} className="text-[13.500px]">{n}</Fit></div>
            {kind === "select" ? (
              <div className="mb-[2px] ml-[4px] flex h-[19px] w-[81px] items-center rounded-[3px] bg-linear-to-b from-[#f7f7f7] to-white pr-[1px] pl-[8px] shadow-xs"><Fit w={vw}>{v}</Fit><Blue /></div>
            ) : (
              <div className="flex h-[17px] w-[89px] items-center border-b border-[#ccc] bg-white pr-[5px] pl-[1px]">{v && <Fit w={vw}>{v}</Fit>}{kind === "combo" && <Dark />}</div>
            )}
          </div>
        ))}
        <Fit w={61} className="text-[13.500px] leading-[17px]">Definition</Fit>
        <div className="h-[180px] w-[194px] shrink-0 border border-[#999] bg-white" />
      </div>
    </div>
  );
}

const ClsIcon = () => (
  <svg width="16" height="16" viewBox="0 0 16 16" fill="none" stroke="#2c5fae" strokeWidth="1.300" className="shrink-0"><rect x=".7" y=".7" width="14.600" height="14.600" fill="#dfeaf8" strokeWidth="1.500" /><path d="M6 3h4v3H6zM8 6v2M4.500 10L8 7.500 11.500 10M3 10h3.500v3H3zM9.500 10H13v3H9.500z" /></svg>
);

type Line = [string, number, number, number];
type Cls = { x: number; y: number; w: number; h: number; d: [number, number]; title: [string, number, number, boolean?]; lines: Line[] };
const classes: Cls[] = [
  { x: 645, y: 381, w: 324, h: 206, d: [418, 476], title: ["NhanVat", 83, 401], lines: [["– maNv : int", 663, 111, 437.5], ["– tenNv : String", 663, 143, 460], ["+ themVp(vp : VatPham) : void", 663, 285, 496], ["+ hienThi() : void", 663, 160, 518.5], ["+ demLuotChoi() : int", 663, 200, 541.5], ["+ demMau() : int", 663, 156, 564.5]] },
  { x: 1175, y: 393, w: 196, h: 114, d: [430, 465], title: ["VatPham", 86, 413, true], lines: [["# maVp : String", 1193, 144, 449], ["+ hienThi() : void", 1194, 160, 485]] },
  { x: 1019, y: 578, w: 196, h: 115, d: [615, 651], title: ["VpTangLuot", 120, 599], lines: [["– soLuot : int", 1038, 122, 635], ["+ hienThi() : void", 1038, 160, 671]] },
  { x: 1313, y: 578, w: 196, h: 115, d: [615, 651], title: ["VpTangMau", 118, 599], lines: [["– soMau : int", 1332, 120, 635], ["+ hienThi() : void", 1332, 160, 671]] },
  { x: 584, y: 684, w: 386, h: 160, d: [720, 756], title: ["QuanLyNhanVat", 159, 704], lines: [["–", 602, 8, 740], ["ds : List<NhanVat>", 618, 182, 740], ["+ themNv(nv : NhanVat) : void", 602, 282, 775.5], ["+ timLuotChoi(id : int) : int", 602, 252, 798], ["+ timDsNvMauMax() : List<NhanVat>", 602, 350, 821]] },
];

/* Diagram canvas, drawn in the coordinates of the desktop */
function Diagram() {
  return (
    <svg width="1270" height="677" viewBox="518 379 1270 677" className="block shrink-0 bg-white font-['Noto_Sans'] text-[18.500px]">
      <path d="M549.500 379v677M1579.500 379v677" stroke="#222" strokeWidth="1.600" />
      {classes.map((c) => (
        <g key={c.title[0]}>
          <rect x={c.x + 1.8} y={c.y + 1.8} width={c.w - 3.6} height={c.h - 3.6} fill="#fefec4" stroke="#000" strokeWidth="3.600" />
          <path d={`M${c.x} ${c.d[0] + 0.5}h${c.w}M${c.x} ${c.d[1] + 0.5}h${c.w}`} stroke="#000" strokeWidth="1.600" />
          <text x={c.x + c.w / 2 - c.title[1] / 2} y={c.title[2] + 5.8} textLength={c.title[1]} lengthAdjust="spacingAndGlyphs" className={c.title[3] ? "font-bold italic" : "font-bold"}>{c.title[0]}</text>
          {c.lines.map(([t, x, w, y]) => (
            <text key={t} x={x} y={y + 5.8} textLength={w} lengthAdjust="spacingAndGlyphs" fill="#111" className="[word-spacing:1.500px]">{t}</text>
          ))}
        </g>
      ))}
      <g fill="#fff" stroke="#111" strokeWidth="1.600">
        <path d="M990 470.500L1175 457.500" />
        <path d="M969.500 471l10-8 11 7.500-11 8z" />
        <path d="M1214 519L1165 578M1325 520L1368.500 578" />
        <path d="M1226 507.500l-20.500 5.500 17 13zM1313.500 507.500l21 7.500-17 12.500z" />
        <path d="M795 587L785 684" stroke="#40406e" />
        <circle cx="600.500" cy="727" r="8" /><circle cx="600.500" cy="749.500" r="8" /><circle cx="801.500" cy="727" r="8" /><circle cx="801.500" cy="749.500" r="8" />
      </g>
      <path d="M807 741l8 9-3 .5 3 6-2 1-3-6-3 2z" fill="#111" />
      <g fill="#222">
        <text x="979" y="506.500" textLength="36" lengthAdjust="spacingAndGlyphs">0..1</text>
        <text x="1141.500" y="493" fontSize="17">*</text><text x="755.500" y="616" fontSize="17">*</text><text x="751" y="658" fontSize="17">*</text>
      </g>
      <path d="M1772 379h16v677h-16z" fill="#fafafa" /><path d="M1772.500 379v677" stroke="#e6e6e6" />
      <rect x="1775" y="578" width="7" height="291" rx="3.500" fill="#c1c0c1" />
    </svg>
  );
}

function Astah() {
  return (
    <div className="absolute top-[212px] left-[148px] flex h-[818px] w-[1501px] flex-col overflow-hidden rounded-tl-[8px] border-t border-l border-[#b5b3b5] bg-[#efedef] font-['Noto_Sans'] text-[#1c1c1c] shadow-[-8px_4px_26px_rgba(0,0,0,0.35)]">
      <Row x0={288} className="h-[26px] shrink-0 border-b border-[#bcbabc] bg-linear-to-b from-[#f1f0f1] to-[#d5d3d5]" items={[[320, 52, <Lights />], [1037.5, 127, <Fit w={127} className="font-[Inter] text-[14px] font-semibold text-[#404040]">Astah - [no_title] (*)</Fit>]]} />
      <Row x0={288} className="h-[28px] shrink-0" items={mainTools} />
      <i className="h-[4px] shrink-0 border-t-2 border-[#a3a1a3] bg-[#cfcdcf]" />
      <div className="flex min-h-0 flex-1">
        <SidePanel />
        <div className="flex w-[11px] shrink-0 flex-col items-center gap-[5px] border-r-2 border-[#b1afb1] bg-[#f8f8f8] pt-[1px]">
          <svg width="5" height="6" viewBox="0 0 5 6"><path d="M5 0v6L0 3z" fill="#666" /></svg>
          <svg width="5" height="6" viewBox="0 0 5 6"><path d="M0 0v6l5-3z" fill="#666" /></svg>
        </div>
        <div className="flex min-w-0 flex-1 flex-col">
          <div className="flex h-[31px] shrink-0 items-center pb-[7px] pl-[12px]">
            <i className="mt-[8px] h-[3px] w-[546px] bg-[#d6d4d6]" />
            <div className="mt-1 flex h-[20px] w-[151px] items-center rounded-[4px] bg-white pl-[7px] shadow-sm">
              <ClsIcon /><Fit w={97} className="ml-[5px] text-[13px]">Class Diagram0</Fit><span className="ml-[7px] text-[13px] text-[#bbb]">×</span>
            </div>
            <i className="mt-[8px] h-[3px] w-[550px] bg-[#d6d4d6]" />
          </div>
          <div className="flex h-[21px] shrink-0 border-b border-[#c6c4c6] bg-linear-to-b from-[#ebe9eb] to-[#d7d5d7]">
            <svg width="9" height="9" viewBox="0 0 9 9"><path d="M0 0h7L0 7z" fill="#3d5f9e" /></svg>
            <Lights className="mt-[4px]" />
            <div className="ml-[463px] flex items-center"><ClsIcon /><Fit w={201} className="ml-[4px] text-[13px] text-[#333]">Class Diagram0 / Class Diagram</Fit></div>
            <svg width="7" height="9" viewBox="0 0 7 9" className="mr-[2px] ml-auto"><path d="M7 0H0l7 7z" fill="#28459b" /></svg>
          </div>
          <Row x0={518} className="h-[30px] shrink-0" items={diagTools} />
          <Diagram />
        </div>
      </div>
    </div>
  );
}

/* ---------- Dock ---------- */
const Tile = ({ children, cls = "bg-white" }: Kids & { cls?: string }) => <div className={"flex size-[51px] items-center justify-center overflow-hidden rounded-[12px] shadow-sm " + cls}>{children}</div>;

const Chrome = ({ s }: { s: number }) => (
  <svg width={s} height={s} viewBox="0 0 42 42">
    <circle cx="21" cy="21" r="21" fill="#f7c23c" />
    <path d="M2.800 10.500A21 21 0 0139.200 10.500H21L12 26z" fill="#d34836" />
    <path d="M2.800 10.500A21 21 0 0020 42l10-16-18 0z" fill="#2f9a58" />
    <circle cx="21" cy="21" r="10" fill="#fff" /><circle cx="21" cy="21" r="7.800" fill="#4a80ea" />
  </svg>
);
const Office = ({ c, d, l, t, s = 38 }: { c: string; d: string; l: string; t: string; s?: number }) => (
  <svg width={s} height={s} viewBox="0 0 38 38"><rect x="9" y="2" width="28" height="34" rx="2" fill={c} /><path d="M9 2h28v10H9z" fill={l} opacity=".6" /><path d="M9 25h28v11H9z" fill={d} opacity=".7" /><rect x="0" y="9" width="20" height="20" rx="2" fill={d} /><text x="10" y="24" textAnchor="middle" fontSize="14" fontWeight="600" fill="#fff">{t}</text></svg>
);
const JB = ({ t, a, b }: { t: string; a: string; b: string }) => (
  <svg width="50" height="50" viewBox="0 0 50 50">
    <defs><linearGradient id={"jb" + t} x1="0" y1="0" x2="1" y2="1"><stop offset="0" stopColor={a} /><stop offset=".4" stopColor={b} /></linearGradient></defs>
    <rect width="50" height="50" fill={`url(#jb${t})`} /><rect x="7" y="7" width="36" height="36" fill="#050505" />
    <text x="10" y="25" fontSize="18" fontWeight="700" fill="#fff" className="font-['Noto_Sans']" textLength={t === "PC" ? 26 : 20} lengthAdjust="spacingAndGlyphs">{t}</text><path d="M11 36h14v2.500H11z" fill="#fff" />
  </svg>
);
const grid = ["#6cc957", "#f0a52c", "#e07e24", "#c2402e", "#9c9f9c", "#e8506a", "#9050c8", "#2e8be8", "#42b590"];

const dock: Item[] = [
  [233.5, 52, <svg width="51" height="51" viewBox="0 0 51 51"><defs><clipPath id="fd"><rect width="51" height="51" rx="12" /></clipPath><linearGradient id="fb" x1="0" y1="0" x2="0" y2="1"><stop stopColor="#4db4f8" /><stop offset="1" stopColor="#2f77e4" /></linearGradient></defs><g clipPath="url(#fd)"><rect width="51" height="51" fill="url(#fb)" /><path d="M28 0q-6 14-6 30h7q0 10 2 21h20V0z" fill="#e9eef7" /></g><path d="M14 15v4M37 15v4" stroke="#1b2b45" strokeWidth="2.500" /><path d="M10 34q15 11 31 0" stroke="#1b2b45" strokeWidth="2" fill="none" /></svg>],
  [299.5, 52, <Tile cls="bg-[#e7e9f0]"><div className="grid grid-cols-3 gap-[4px]">{grid.map((c) => <i key={c} className="size-[9px] rounded-[2px]" style={{ background: c }} />)}</div></Tile>],
  [366.5, 52, <Tile cls="bg-[#efefec] flex-col !justify-start"><i className="h-[14px] w-full shrink-0 border-b border-[#b49a50] bg-[#f8be3e]" /></Tile>],
  [433.5, 52, <Tile><span className="mr-[5px]"><Office c="#2465c0" d="#174a9c" l="#3f86d8" t="W" /></span></Tile>],
  [500, 52, <Tile cls="bg-linear-to-b from-[#3793ee] to-[#2263dc]"><svg width="38" height="36" viewBox="0 0 38 36" stroke="#fff" strokeWidth="3.600" fill="none" strokeLinecap="round"><path d="M21 3L9 25M17 3l13 23M3 24h18M29 24h6M7 29l-2 4M30 26l3 6" /></svg></Tile>],
  [567, 52, <Tile cls="bg-linear-to-b from-[#dbe0df] to-[#8c8c8c]"><svg width="45" height="45" viewBox="0 0 45 45" fill="none" stroke="#2b2b2b"><circle cx="22.500" cy="22.500" r="20" strokeWidth="4" /><circle cx="22.500" cy="22.500" r="16" strokeWidth="3" stroke="#555" strokeDasharray="1.500 1.500" /><circle cx="22.500" cy="22.500" r="12" stroke="#a5a5a5" strokeWidth="3" fill="#444" /><path d="M22.500 22.500h12M22.500 22.500l-6-11M22.500 22.500l-6 11" stroke="#aaa" strokeWidth="3" /></svg></Tile>],
  [633.5, 52, <Tile><Chrome s={42} /></Tile>],
  [700.5, 54, <svg width="54" height="60" viewBox="0 0 54 60"><path d="M27 1l26 13v31L27 59 1 45V14z" fill="#c9c9c9" stroke="#7b7b7b" strokeWidth="1.500" /><path d="M1 14l26-13v58L1 45z" fill="#b5b5b5" opacity=".6" /><path d="M13 12h28v8L27 40h14v10H13v-8l14-20H13z" fill="#cf2d2b" /></svg>],
  [767.5, 50, <JB t="PC" a="#2fd069" b="#e6ea35" />],
  [834, 52, <div className="flex h-[50px] w-[52px] items-center justify-center rounded-full bg-[radial-gradient(circle,#8b989d,#66757c)] font-['Liberation_Serif'] text-[26px] leading-none tracking-tight text-[#f1f1f1] shadow-md"><span>T</span><span className="-ml-[3px] mt-[10px]">E</span><span className="-ml-[3px]">X</span></div>],
  [900, 50, <JB t="IJ" a="#e5375f" b="#3568ea" />],
  [966, 52, <Tile><svg width="36" height="38" viewBox="0 0 36 38"><path d="M26 1l9 4v28l-9 4z" fill="#2f8fe0" /><path d="M26 1v9L6 27l-5-4zM26 37v-9L6 11l-5 4z" fill="#2274c4" /></svg></Tile>],
  [1033, 56, <svg width="56" height="62" viewBox="0 0 56 62"><path d="M28 0l28 18-12 4-16-9-16 9L0 18z" fill="#b4c04a" /><path d="M0 18l12 4v19l16 9v12L0 46z" fill="#b93349" /><path d="M56 18l-12 4v19l-16 9v12l28-16z" fill="#3f72c2" /><path d="M28 13l16 9v19l-16 9-16-9V22z" fill="#f2f4ea" /><path d="M28 31l16-9v19l-16 9z" fill="#d0d6e4" /></svg>],
  [1100, 56, <svg width="56" height="60" viewBox="0 0 56 60"><path d="M36 2l18 9v38l-18 9L4 46q-2-1-2-3V17q0-2 2-3z" fill="#f3effa" stroke="#7149b8" strokeWidth="3" strokeLinejoin="round" /><path d="M36 10l10 4v32l-10 4z" fill="#9b75dc" /><path d="M36 10v12L14 42l-5-3V21l5-3 22 20v12L14 29z" fill="#5d35a8" /></svg>],
  [1149, 1, <i className="h-[58px] w-px bg-[#c4c4c4]" />],
  [1197, 52, <Tile><svg width="38" height="36" viewBox="0 0 38 36"><circle cx="20" cy="18" r="17.500" fill="#e2683c" /><path d="M20 .5A17.500 17.500 0 0137.500 18H20z" fill="#f39a76" /><rect y="7" width="19" height="20" rx="2" fill="#c3431f" /><text x="9.500" y="22" textAnchor="middle" fontSize="14" fontWeight="700" fill="#fff">P</text></svg></Tile>],
  [1263.5, 52, <Tile><span className="mr-[5px]"><Office c="#24905a" d="#17693f" l="#3cb47a" t="X" /></span></Tile>],
  [1330, 62, <div className="flex h-[45px] w-[56px] -rotate-[8deg] items-center justify-center border border-[#9a9a9a] bg-white"><svg width="33" height="34" viewBox="0 0 33 34" fill="none" stroke="#17288f" strokeWidth="4"><path d="M3 24A14 14 0 0119 4M30 10A14 14 0 0114 30" /><path d="M18 0l8 6-8 5zM15 34l-8-6 8-5z" fill="#17288f" stroke="none" /></svg></div>],
  [1397, 56, <svg width="55" height="56" viewBox="0 0 55 56"><ellipse cx="27.500" cy="28" rx="27" ry="27.500" fill="#1c2bb0" /><path d="M27 0v12M4 12l16 5M48 8l-12 9M36 22l18 18" stroke="#fff" strokeWidth="4" /><text x="10" y="47" fontSize="36" fontWeight="700" fill="#fff">a</text></svg>],
  [1445.5, 1, <i className="h-[58px] w-px bg-[#c4c4c4]" />],
  [1494, 58, <div className="relative flex h-[54px] w-[58px] flex-col"><i className="mt-[8px] h-[3px] bg-[#6b8f7e]" /><i className="mt-[4px] ml-[3px] h-[26px] w-[46px] bg-white shadow-xs" /><span className="absolute right-[2px] bottom-0"><Office c="#24905a" d="#17693f" l="#3cb47a" t="" s={16} /></span></div>],
  [1561, 58, <div className="relative flex h-[54px] w-[58px] flex-col"><i className="mt-[5px] h-[3px] bg-[#4461ae]" /><i className="mt-[4px] ml-[10px] h-[32px] w-[36px] bg-white shadow-xs" /><span className="absolute right-[2px] bottom-0"><Office c="#3578d0" d="#2058b0" l="#5b9ae8" t="" s={16} /></span></div>],
  [1629, 54, <div className="relative flex h-[54px] w-[54px] items-start"><i className="mt-[27px] h-px w-[34px] bg-[#bbb]" /><i className="mt-[24px] h-[5px] w-[14px] bg-[#4a86dc]" /><span className="absolute right-[1px] bottom-0"><Chrome s={17} /></span></div>],
  [1692, 44, <svg width="42" height="56" viewBox="0 0 42 56"><path d="M1 3q20-5 40 0l-5 49q-15 6-29 0z" fill="#dfdfe0" /><path d="M13 6v46M29 6l-2 46" stroke="#f3f3f3" strokeWidth="5" /></svg>],
];
const dots = [233.5, 433.5, 634, 834, 900, 1197, 1263.5, 1330, 1397];

function Dock() {
  return (
    <div className="absolute top-[948px] left-[58px] flex h-[78px] w-[1532px] flex-col rounded-[20px] border border-[#dcdcdc] bg-[linear-gradient(90deg,#76859f_0px,#8f98ad_70px,#c7c9d4_100px,#f1f0f1_150px,#f1f0f1_100%)] font-[Inter]">
      <Row x0={198} items={dock} className="mt-[4px] h-[64px]" />
      <Row x0={198} items={dots.map((x) => [x, 5, <i className="size-[4px] rounded-full bg-[#555]" />] as Item)} />
    </div>
  );
}

export default function App() {
  const btn = "flex size-[14px] items-center justify-center rounded-full";
  return (
    <div className="flex h-[1082px] w-[1922px] flex-col overflow-hidden border-t border-r-2 border-b border-black bg-[#202124] font-[Inter] text-white">
      <div className="mt-[6px] mr-[2px] ml-[7px] flex h-[13px] shrink-0 items-center rounded-[2px] bg-[#3c4043] pl-[5px]">
        <i className="size-[9px] rounded-full bg-linear-to-r from-[#3a6fb0] to-[#a99a90]" />
        <Fit w={95} className="ml-[5px] text-[7.500px] font-bold">Thanh Duong Huu đang trình bày</Fit>
      </div>
      <div className="mt-[6px] flex h-[1030px] shrink-0">
        <div className="relative ml-[139px] h-[1030px] w-[1649px] overflow-hidden bg-[#0b2a4e]">
          <svg width="34" height="20" viewBox="0 0 34 20" className="absolute top-[1010px] left-[24px]"><path d="M2 20l8-6 4-10 6-3 3 5 8 3-6 5-9 6z" fill="#9d8a68" /><path d="M14 6l5-3 2 7-6 3z" fill="#d8c79a" /></svg>
          <MenuBar />
          <Word />
          <Astah />
          <Dock />
        </div>
        <div className="mt-auto mb-[6px] ml-[74px] flex h-[12px] w-[53px] items-center rounded-[2px] bg-[#3c4043] pl-[2px]">
          <i className="size-[8px] rounded-full bg-[#80868b]" />
          <VideoOff size={7} className="ml-[4px] text-[#aaa]" />
          <Fit w={11} className="ml-[4px] text-[7px] font-bold">Bạn</Fit>
          <Maximize2 size={7} strokeWidth={3.5} className="ml-[8px]" />
        </div>
      </div>
      <div className="flex h-[25px] items-center">
        <Fit w={65} className="ml-[9px] text-[7.500px] font-semibold">{"15:58  |  tut-rxsj-dxc"}</Fit>
        <div className="ml-[833.500px] flex gap-[4px]">
          <div className={btn + " bg-[#ea4335]"}><MicOff size={8} /></div>
          <div className={btn + " bg-[#ea4335]"}><VideoOff size={8} /></div>
          <div className={btn + " bg-[#3c4043]"}><Hand size={9} strokeWidth={2.5} /></div>
          <div className={btn + " bg-[#3c4043]"}><svg width="10" height="8" viewBox="0 0 10 8"><rect x=".7" y=".7" width="8.600" height="6.600" fill="none" stroke="#fff" strokeWidth="1.400" /><path d="M5 2l2 2H5.600v2H4.400V4H3z" fill="#fff" /></svg></div>
          <div className={btn + " bg-[#3c4043]"}><EllipsisVertical size={9} strokeWidth={4} /></div>
          <div className="flex h-[14px] w-[19px] items-center justify-center rounded-full bg-[#ea4335]"><svg width="10" height="5" viewBox="0 0 10 5"><path d="M0 3q5-5.500 10 0l-1.600 1.800L6.500 3.700V2.500q-1.500-.5-3 0v1.200L1.600 4.800z" fill="#fff" /></svg></div>
        </div>
        <div className="mr-[5px] ml-auto flex items-center gap-[7px]">
          <Info size={9} strokeWidth={3} />
          <div className="relative"><Users size={9} strokeWidth={3} fill="#fff" /><i className="absolute -top-[5px] right-0 size-[6px] rounded-full border border-[#9aa0a6] bg-[#5f6368]" /></div>
          <MessageSquareText size={9} strokeWidth={3} />
        </div>
      </div>
    </div>
  );
}
